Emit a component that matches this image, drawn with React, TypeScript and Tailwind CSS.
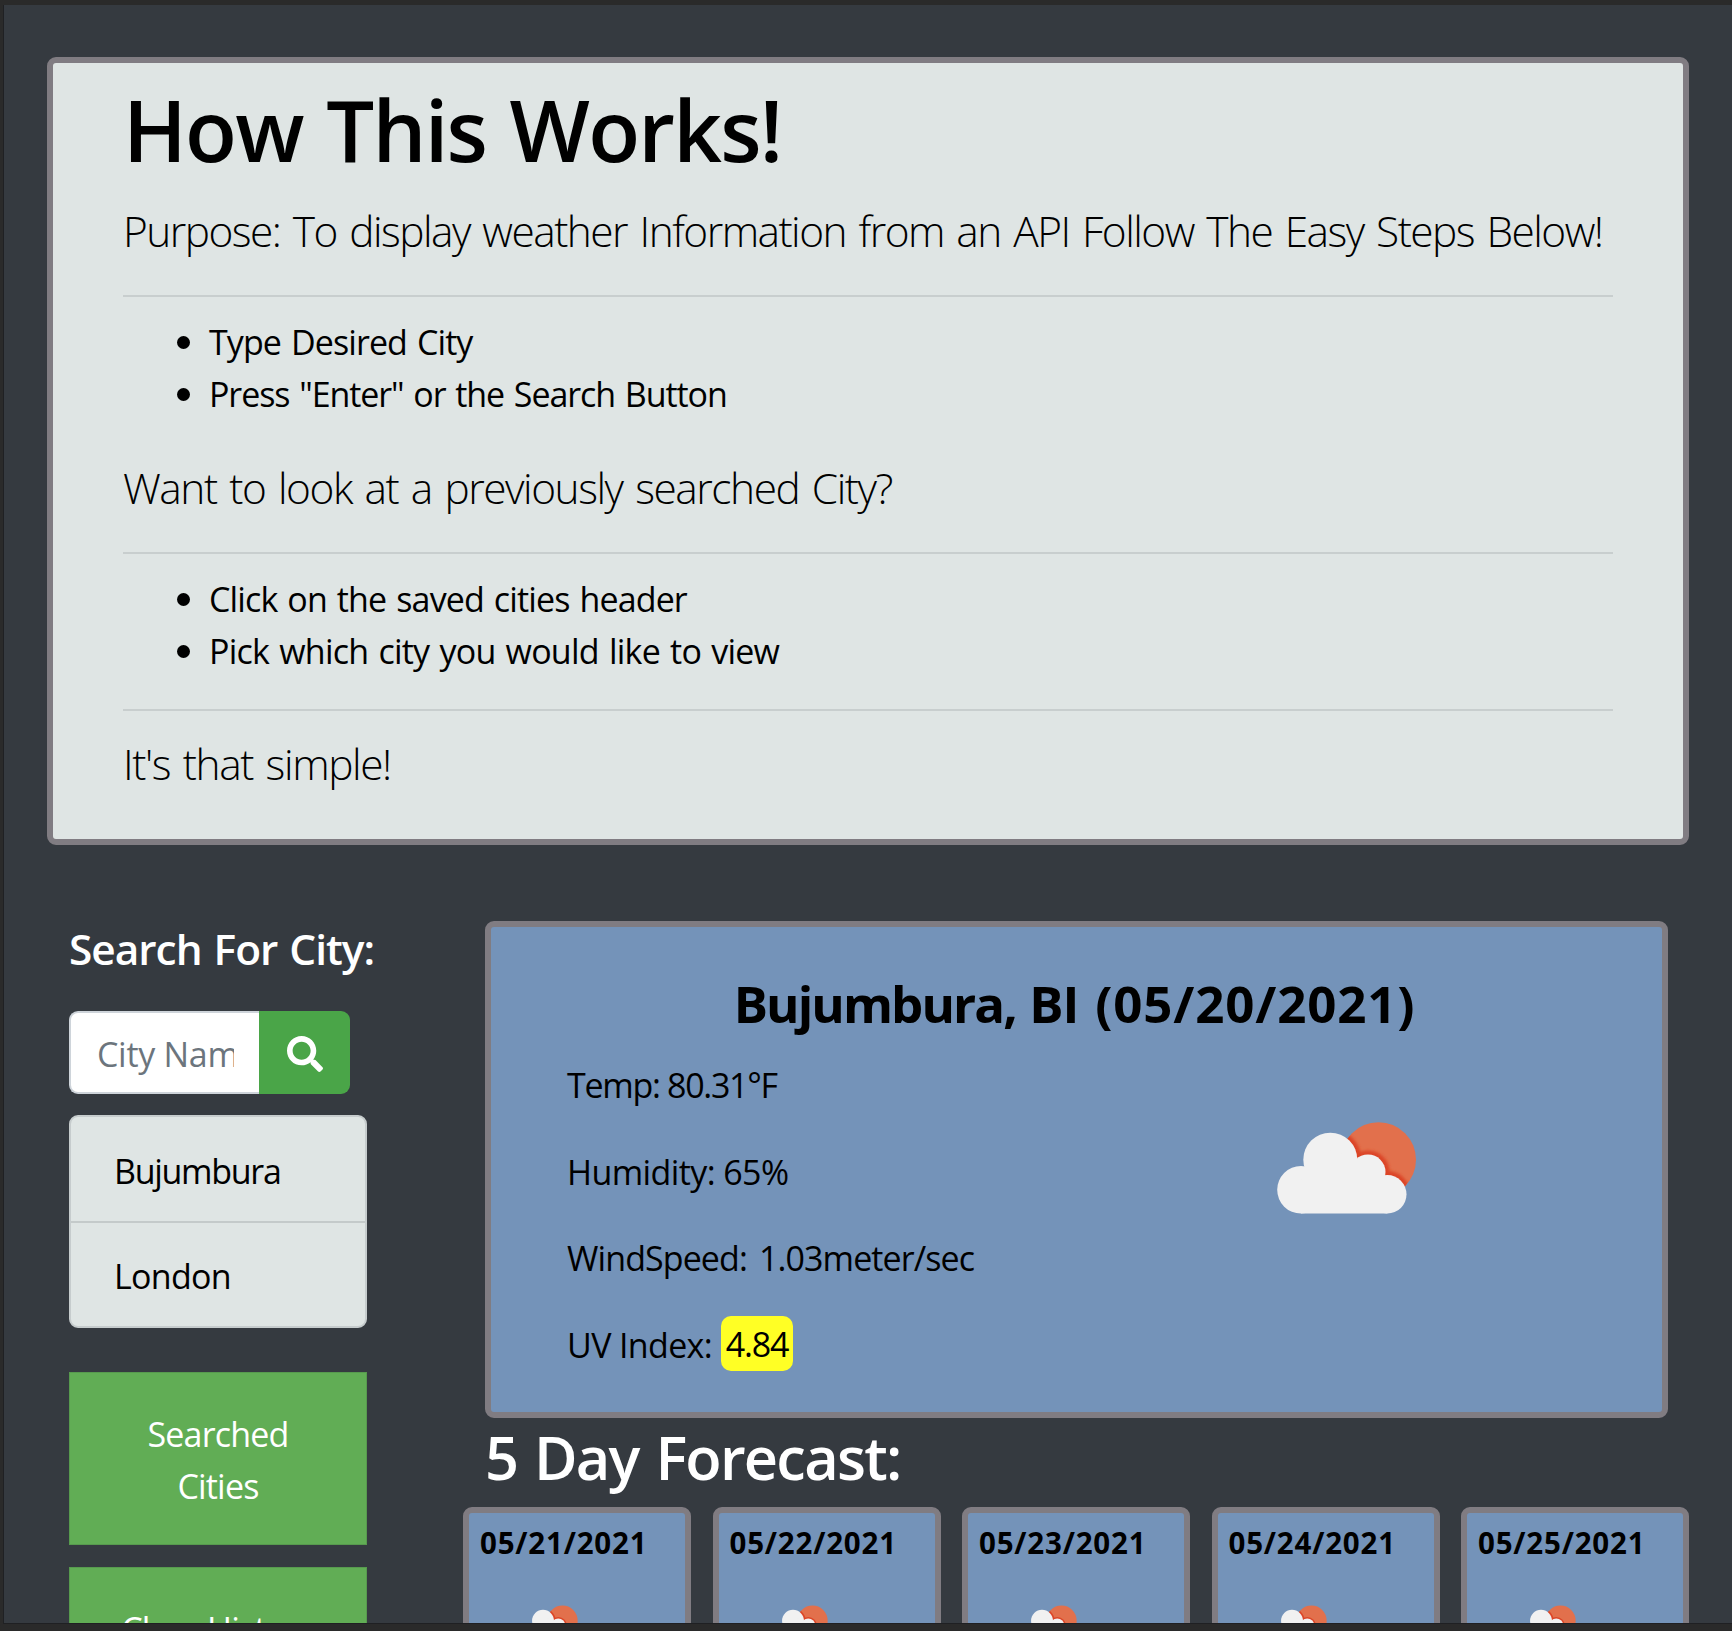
import React, { useId } from "react";
import { FaSearch } from "react-icons/fa";

function CloudShapes() {
  return (
    <>
      <circle cx="61" cy="99.8" r="23.8" />
      <circle cx="90.3" cy="69.7" r="27" />
      <circle cx="128" cy="82" r="17.5" />
      <circle cx="147.3" cy="104.3" r="19.2" />
      <path d="M61 123.5 V90 L90 60 L112 66 L128 80 L147.3 100 V123.5 Z" />
    </>
  );
}

function WeatherIcon({ className }: { className: string }) {
  const id = useId();
  return (
    <svg viewBox="36 31 142 94" className={className} aria-hidden="true">
      <defs>
        <clipPath id={`${id}sun`}>
          <circle cx="138.5" cy="69.7" r="37.5" />
        </clipPath>
        <filter id={`${id}soft`} x="-20%" y="-20%" width="140%" height="140%">
          <feGaussianBlur stdDeviation="1.8" />
        </filter>
      </defs>
      <circle cx="138.5" cy="69.7" r="37.5" fill="#e2704c" />
      <g clipPath={`url(#${id}sun)`}>
        <g filter={`url(#${id}soft)`} fill="#dc4526" stroke="#dc4526" strokeWidth="8">
          <CloudShapes />
        </g>
      </g>
      <g fill="#f1f1f1">
        <CloudShapes />
      </g>
    </svg>
  );
}

function Rule({ className }: { className: string }) {
  return <hr className={`h-0.5 border-0 bg-[#c8cece] ${className}`} />;
}

function Lead({ children, className }: { children: React.ReactNode; className: string }) {
  return (
    <p className={`text-[42.4px] leading-[65px] font-light [word-spacing:3px] whitespace-nowrap ${className}`}>
      {children}
    </p>
  );
}

function Step({ children, className }: { children: React.ReactNode; className: string }) {
  return (
    <li className="flex h-[52px] items-center pl-[54px]">
      <span className="mr-[19px] size-[13px] shrink-0 rounded-full bg-black" />
      <span className={`[word-spacing:2px] whitespace-nowrap ${className}`}>{children}</span>
    </li>
  );
}

function Instructions() {
  return (
    <section className="mt-[52px] ml-[43px] h-[788px] w-[1642px] rounded-[9px] border-6 border-[#807c82] bg-[#dfe5e4] px-[70px] pt-[14px]">
      <h1 className="text-[85px] leading-[104px] font-semibold tracking-[-1.75px] [word-spacing:3px] whitespace-nowrap">
        How This Works!
      </h1>
      <Lead className="mt-[17px] tracking-[-1.53px]">
        Purpose: To display weather Information from an API Follow The Easy Steps Below!
      </Lead>
      <Rule className="mt-8" />
      <ul className="mt-[19px]">
        <Step className="tracking-[-0.9px]">Type Desired City</Step>
        <Step className="tracking-[-1.08px]">Press "Enter" or the Search Button</Step>
      </ul>
      <Lead className="mt-[35px] tracking-[-1.45px]">Want to look at a previously searched City?</Lead>
      <Rule className="mt-8" />
      <ul className="mt-[19px]">
        <Step className="tracking-[-0.87px]">Click on the saved cities header</Step>
        <Step className="tracking-[-0.76px]">Pick which city you would like to view</Step>
      </ul>
      <Rule className="mt-8" />
      <Lead className="mt-5 tracking-[-1.4px]">It's that simple!</Lead>
    </section>
  );
}

function Sidebar() {
  return (
    <aside className="w-[394px] shrink-0 pt-[78px]">
      <h2 className="text-[42.4px] leading-[52px] font-semibold tracking-[-1px] [word-spacing:2px] whitespace-nowrap text-white">
        Search For City:
      </h2>
      <div className="mt-9 flex h-[83px]">
        <div className="w-[190px] rounded-l-[9px] border-2 border-r-0 border-[#ced4da] bg-white pt-[3px] pl-[26px]">
          <div className="w-[137px] overflow-hidden leading-[76px] tracking-[-0.3px] whitespace-nowrap text-[#6c757d]">
            City Name
          </div>
        </div>
        <button className="flex w-[91px] items-center justify-center rounded-r-[9px] bg-[#4aa548] pt-0.5 text-white">
          <FaSearch className="size-[36px]" />
        </button>
      </div>
      <ul className="mt-[21px] h-[213px] w-[298px] rounded-[9px] border-2 border-[#c6cccd] bg-[#dfe5e4] leading-[104px]">
        <li className="h-[106px] border-b-2 border-[#c4caca] pt-0.5 pl-[43px] tracking-[-1.3px]">Bujumbura</li>
        <li className="pt-px pl-[43px] tracking-[-0.7px]">London</li>
      </ul>
      <button className="mt-11 block h-[173px] w-[298px] border border-[#579a4e] bg-[#61ad55] px-16 pt-0.5 text-center leading-[52px] tracking-[-0.8px] text-white">
        Searched Cities
      </button>
      <button className="mt-[22px] flex h-[173px] w-[298px] justify-center border border-[#579a4e] bg-[#61ad55] pt-[35px] leading-[52px] tracking-[-0.8px] whitespace-nowrap text-white">
        Clear History
      </button>
    </aside>
  );
}

function CurrentWeather() {
  return (
    <section className="ml-[22px] h-[497px] w-[1183px] rounded-[9px] border-6 border-[#807c82] bg-[#7493b9] pt-[45px]">
      <h3 className="-ml-1 text-center text-[51px] leading-[62px] font-bold">
        <span className="tracking-[-1.9px]">Bujumbura,</span>{" "}
        <span className="tracking-[-0.8px] [word-spacing:4px]">BI </span>
        <span className="tracking-[0.85px]">(05/20/2021)</span>
      </h3>
      <div className="mt-[25px] flex items-start pl-[76px]">
        <div className="flex w-[709px] flex-col gap-[34.5px] leading-[52px] whitespace-nowrap">
          <p className="tracking-[-1.3px]">Temp: 80.31°F</p>
          <p className="tracking-[-0.6px]">Humidity: 65%</p>
          <p className="tracking-[-0.9px] [word-spacing:4px]">WindSpeed: 1.03meter/sec</p>
          <p className="flex h-[52px] items-center tracking-[-0.65px]">
            <span className="w-[154px]">UV Index:</span>
            <span className="-mt-0.5 h-[55px] w-[72px] rounded-[10px] bg-[#ffff25] text-center leading-[56px] tracking-[-1.2px]">
              4.84
            </span>
          </p>
        </div>
        <WeatherIcon className="mt-[62px] h-[94px] w-[142px]" />
      </div>
    </section>
  );
}

const forecastDates = ["05/21/2021", "05/22/2021", "05/23/2021", "05/24/2021", "05/25/2021"];

function Forecast() {
  return (
    <section>
      <h2 className="mt-0.5 ml-[22px] text-[59.5px] leading-[73px] font-semibold tracking-[-1.75px] [word-spacing:3px] text-white">
        5 Day Forecast:
      </h2>
      <div className="mt-[14px] flex gap-[21.5px]">
        {forecastDates.map((date) => (
          <article
            key={date}
            className="h-[400px] w-[228px] shrink-0 rounded-[9px] border-6 border-[#807c82] bg-[#7493b9] pt-[10px] pl-[11px]"
          >
            <h4 className="text-[29.5px] leading-10 font-bold tracking-[0.8px]">{date}</h4>
            <WeatherIcon className="mt-[42px] ml-[41px] h-[38px] w-[57.5px]" />
          </article>
        ))}
      </div>
    </section>
  );
}

export default function App() {
  return (
    <div className="flex h-[1631px] w-[1732px] flex-col overflow-hidden bg-[#2a2a2a] pt-[5px] pl-[3px] font-['Open_Sans',sans-serif] text-[34px] text-black">
      <main className="h-[1619px] w-[1729px] shrink-0 overflow-hidden border-b border-l border-[#1f2023] bg-[#353a40]">
        <Instructions />
        <div className="flex h-[900px] pl-[65px]">
          <Sidebar />
          <div className="shrink-0 pt-[76px]">
            <CurrentWeather />
            <Forecast />
          </div>
        </div>
      </main>
    </div>
  );
}
